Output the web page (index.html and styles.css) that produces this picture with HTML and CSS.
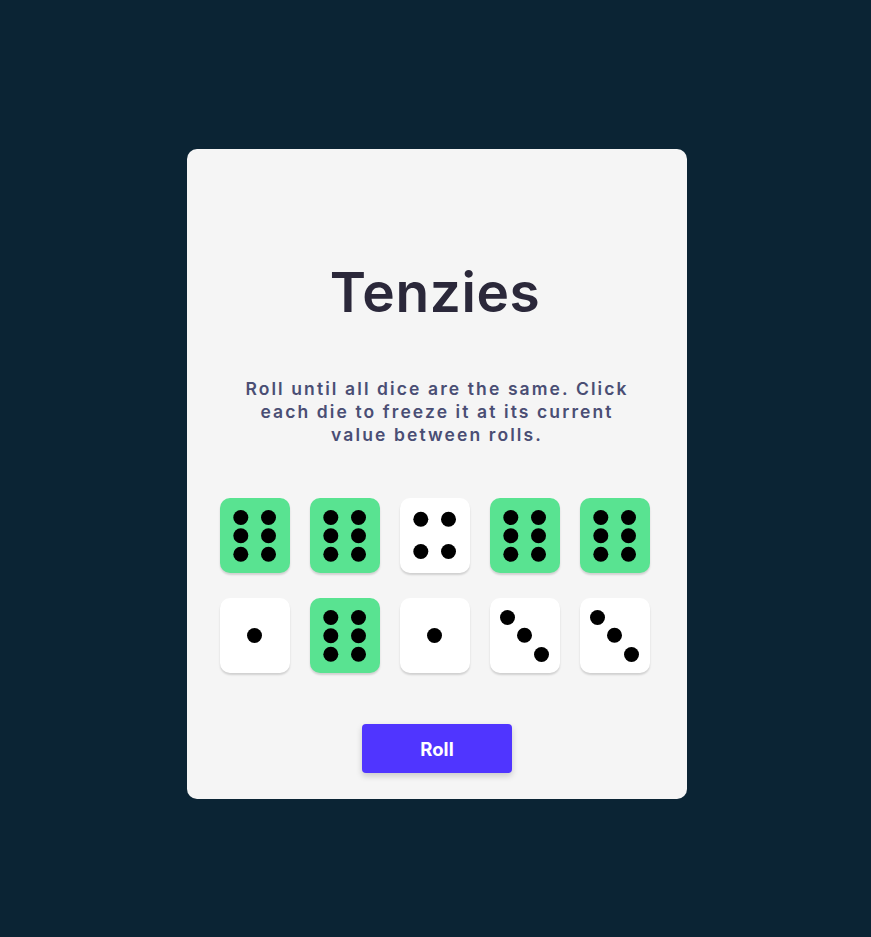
FILE: index.html
```html
<!DOCTYPE html>
<html lang="en">
<head>
<meta charset="utf-8">
<title>Tenzies</title>
<link rel="stylesheet" href="styles.css">
</head>
<body>
<main class="card">
  <h1 class="title">Tenzies</h1>
  <p class="instructions">Roll until all dice are the same. Click each die to freeze it at its current value between rolls.</p>
  <div class="dice">
    <div class="die held"><svg viewBox="0 0 70 75" width="70" height="75"><circle cx="20.8" cy="19.5" r="7.5"/><circle cx="48.5" cy="19.5" r="7.5"/><circle cx="20.8" cy="37.8" r="7.5"/><circle cx="48.5" cy="37.8" r="7.5"/><circle cx="20.8" cy="56.2" r="7.5"/><circle cx="48.5" cy="56.2" r="7.5"/></svg></div>
    <div class="die held"><svg viewBox="0 0 70 75" width="70" height="75"><circle cx="20.8" cy="19.5" r="7.5"/><circle cx="48.5" cy="19.5" r="7.5"/><circle cx="20.8" cy="37.8" r="7.5"/><circle cx="48.5" cy="37.8" r="7.5"/><circle cx="20.8" cy="56.2" r="7.5"/><circle cx="48.5" cy="56.2" r="7.5"/></svg></div>
    <div class="die"><svg viewBox="0 0 70 75" width="70" height="75"><circle cx="20.8" cy="21.2" r="7.5"/><circle cx="48.5" cy="21.2" r="7.5"/><circle cx="20.8" cy="53.5" r="7.5"/><circle cx="48.5" cy="53.5" r="7.5"/></svg></div>
    <div class="die held"><svg viewBox="0 0 70 75" width="70" height="75"><circle cx="20.8" cy="19.5" r="7.5"/><circle cx="48.5" cy="19.5" r="7.5"/><circle cx="20.8" cy="37.8" r="7.5"/><circle cx="48.5" cy="37.8" r="7.5"/><circle cx="20.8" cy="56.2" r="7.5"/><circle cx="48.5" cy="56.2" r="7.5"/></svg></div>
    <div class="die held"><svg viewBox="0 0 70 75" width="70" height="75"><circle cx="20.8" cy="19.5" r="7.5"/><circle cx="48.5" cy="19.5" r="7.5"/><circle cx="20.8" cy="37.8" r="7.5"/><circle cx="48.5" cy="37.8" r="7.5"/><circle cx="20.8" cy="56.2" r="7.5"/><circle cx="48.5" cy="56.2" r="7.5"/></svg></div>
    <div class="die"><svg viewBox="0 0 70 75" width="70" height="75"><circle cx="34.5" cy="37.5" r="7.5"/></svg></div>
    <div class="die held"><svg viewBox="0 0 70 75" width="70" height="75"><circle cx="20.8" cy="19.5" r="7.5"/><circle cx="48.5" cy="19.5" r="7.5"/><circle cx="20.8" cy="37.8" r="7.5"/><circle cx="48.5" cy="37.8" r="7.5"/><circle cx="20.8" cy="56.2" r="7.5"/><circle cx="48.5" cy="56.2" r="7.5"/></svg></div>
    <div class="die"><svg viewBox="0 0 70 75" width="70" height="75"><circle cx="34.5" cy="37.5" r="7.5"/></svg></div>
    <div class="die"><svg viewBox="0 0 70 75" width="70" height="75"><circle cx="17.5" cy="19.5" r="7.5"/><circle cx="34.5" cy="37.2" r="7.5"/><circle cx="51.5" cy="56.5" r="7.5"/></svg></div>
    <div class="die"><svg viewBox="0 0 70 75" width="70" height="75"><circle cx="17.5" cy="19.5" r="7.5"/><circle cx="34.5" cy="37.2" r="7.5"/><circle cx="51.5" cy="56.5" r="7.5"/></svg></div>
  </div>
  <button class="roll">Roll</button>
</main>
</body>
</html>
```

FILE: styles.css
```css
html, body {
  margin: 0;
  padding: 0;
}
body {
  background: #0B2434;
  min-height: 937px;
  font-family: "Inter", "Liberation Sans", sans-serif;
  display: flex;
  justify-content: center;
  align-items: flex-start;
  padding-left: 3px;
}
.card {
  box-sizing: border-box;
  width: 500px;
  height: 650px;
  margin-top: 149px;
  background: #F5F5F5;
  border-radius: 10px;
  display: flex;
  flex-direction: column;
  align-items: center;
  padding-top: 108px;
}
.title {
  margin: 0;
  font-size: 55px;
  line-height: 70px;
  font-weight: 600;
  color: #2B283A;
  letter-spacing: 0.6px;
  padding-right: 4px;
}
.instructions {
  margin: 50px 0 0;
  width: 396px;
  text-align: center;
  font-size: 17.5px;
  line-height: 23px;
  font-weight: 600;
  letter-spacing: 2.1px;
  color: #4A4E74;
}
.dice {
  margin-top: 52px;
  display: grid;
  grid-template-columns: repeat(5, 70px);
  grid-auto-rows: 75px;
  column-gap: 20px;
  row-gap: 25px;
  padding-right: 4px;
}
.die {
  width: 70px;
  height: 75px;
  background: #FFFFFF;
  border-radius: 10px;
  box-shadow: 0 2px 2px rgba(0, 0, 0, 0.15);
}
.die.held {
  background: #59E391;
}
.die svg {
  display: block;
  fill: #000;
}
.roll {
  margin-top: 51px;
  width: 150px;
  height: 49px;
  border: none;
  border-radius: 4px;
  background: #5035FF;
  color: #FFFFFF;
  font-family: "Inter", "Liberation Sans", sans-serif;
  font-size: 18.5px;
  font-weight: 700;
  box-shadow: 0 3px 6px rgba(0, 0, 0, 0.18);
  cursor: pointer;
}
```
